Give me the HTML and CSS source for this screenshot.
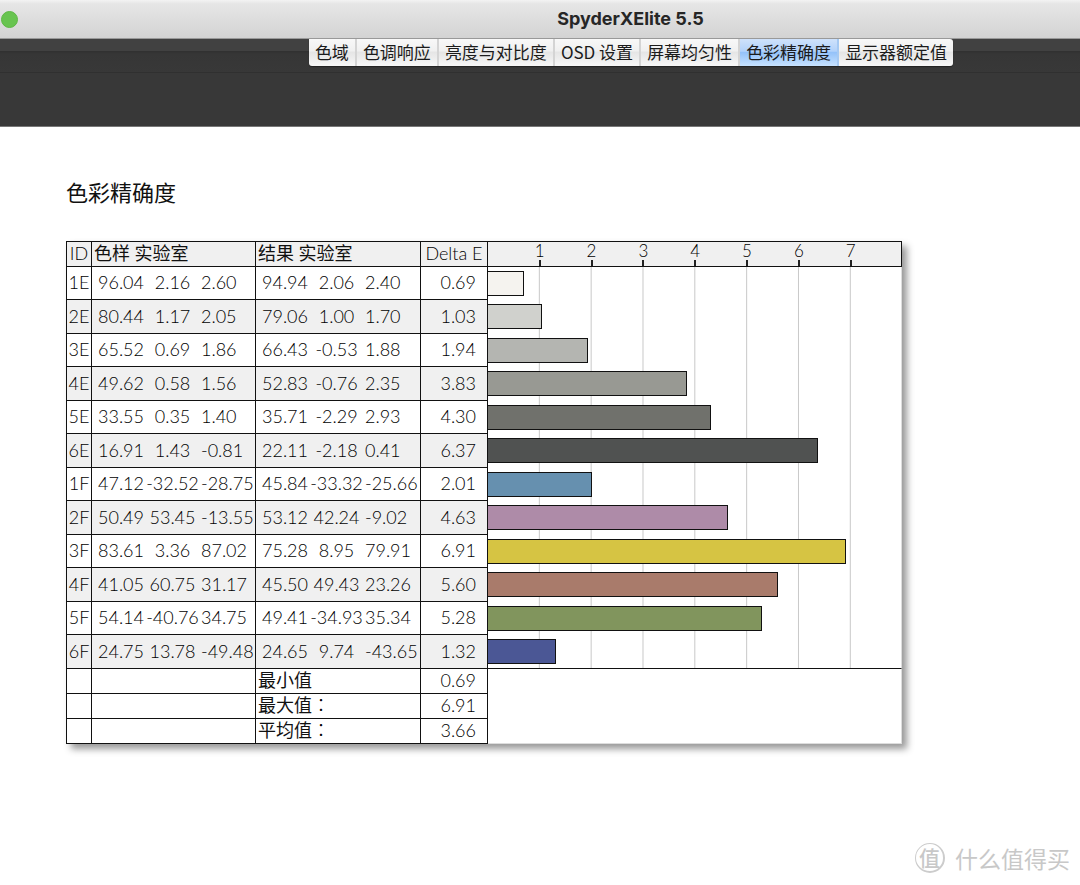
FILE: index.html
```
<!DOCTYPE html>
<html lang="zh-CN">
<head>
<meta charset="utf-8">
<title>SpyderXElite 5.5</title>
<link rel="stylesheet" href="styles.css">
</head>
<body>
<header class="titlebar">
  <button class="zoom-button" type="button" aria-label="缩放窗口"></button>
  <h1 class="window-title">SpyderXElite 5.5</h1>
</header>
<nav class="toolbar">
  <div class="tabs">
    <button class="tab" type="button">色域</button>
    <button class="tab" type="button">色调响应</button>
    <button class="tab" type="button">亮度与对比度</button>
    <button class="tab" type="button">OSD 设置</button>
    <button class="tab" type="button">屏幕均匀性</button>
    <button class="tab tab-active" type="button" aria-current="page">色彩精确度</button>
    <button class="tab" type="button">显示器额定值</button>
  </div>
</nav>
<main class="content">
  <h2 class="heading">色彩精确度</h2>
  <table class="report">
    <colgroup>
      <col class="col-id"><col class="col-sample"><col class="col-result"><col class="col-delta"><col>
    </colgroup>
    <thead>
      <tr>
        <th class="id">ID</th><th>色样 实验室</th><th>结果 实验室</th><th class="delta-head">Delta E</th>
        <th class="axis-cell"><div class="axis"><span>1</span><span>2</span><span>3</span><span>4</span><span>5</span><span>6</span><span>7</span></div></th>
      </tr>
    </thead>
    <tbody>
      <tr><td class="id">1E</td><td><div class="lab"><span>96.04</span><span>2.16</span><span>2.60</span></div></td><td><div class="lab"><span>94.94</span><span>2.06</span><span>2.40</span></div></td><td class="delta">0.69</td><td class="plot"><div class="bar bar-1e" style="width:8.63%"></div></td></tr>
      <tr><td class="id">2E</td><td><div class="lab"><span>80.44</span><span>1.17</span><span>2.05</span></div></td><td><div class="lab"><span>79.06</span><span>1.00</span><span>1.70</span></div></td><td class="delta">1.03</td><td class="plot"><div class="bar bar-2e" style="width:12.98%"></div></td></tr>
      <tr><td class="id">3E</td><td><div class="lab"><span>65.52</span><span>0.69</span><span>1.86</span></div></td><td><div class="lab"><span>66.43</span><span>-0.53</span><span>1.88</span></div></td><td class="delta">1.94</td><td class="plot"><div class="bar bar-3e" style="width:24.3%"></div></td></tr>
      <tr><td class="id">4E</td><td><div class="lab"><span>49.62</span><span>0.58</span><span>1.56</span></div></td><td><div class="lab"><span>52.83</span><span>-0.76</span><span>2.35</span></div></td><td class="delta">3.83</td><td class="plot"><div class="bar bar-4e" style="width:48.07%"></div></td></tr>
      <tr><td class="id">5E</td><td><div class="lab"><span>33.55</span><span>0.35</span><span>1.40</span></div></td><td><div class="lab"><span>35.71</span><span>-2.29</span><span>2.93</span></div></td><td class="delta">4.30</td><td class="plot"><div class="bar bar-5e" style="width:53.97%"></div></td></tr>
      <tr><td class="id">6E</td><td><div class="lab"><span>16.91</span><span>1.43</span><span>-0.81</span></div></td><td><div class="lab"><span>22.11</span><span>-2.18</span><span>0.41</span></div></td><td class="delta">6.37</td><td class="plot"><div class="bar bar-6e" style="width:79.94%"></div></td></tr>
      <tr><td class="id">1F</td><td><div class="lab"><span>47.12</span><span>-32.52</span><span>-28.75</span></div></td><td><div class="lab"><span>45.84</span><span>-33.32</span><span>-25.66</span></div></td><td class="delta">2.01</td><td class="plot"><div class="bar bar-1f" style="width:25.23%"></div></td></tr>
      <tr><td class="id">2F</td><td><div class="lab"><span>50.49</span><span>53.45</span><span>-13.55</span></div></td><td><div class="lab"><span>53.12</span><span>42.24</span><span>-9.02</span></div></td><td class="delta">4.63</td><td class="plot"><div class="bar bar-2f" style="width:58.11%"></div></td></tr>
      <tr><td class="id">3F</td><td><div class="lab"><span>83.61</span><span>3.36</span><span>87.02</span></div></td><td><div class="lab"><span>75.28</span><span>8.95</span><span>79.91</span></div></td><td class="delta">6.91</td><td class="plot"><div class="bar bar-3f" style="width:86.72%"></div></td></tr>
      <tr><td class="id">4F</td><td><div class="lab"><span>41.05</span><span>60.75</span><span>31.17</span></div></td><td><div class="lab"><span>45.50</span><span>49.43</span><span>23.26</span></div></td><td class="delta">5.60</td><td class="plot"><div class="bar bar-4f" style="width:70.28%"></div></td></tr>
      <tr><td class="id">5F</td><td><div class="lab"><span>54.14</span><span>-40.76</span><span>34.75</span></div></td><td><div class="lab"><span>49.41</span><span>-34.93</span><span>35.34</span></div></td><td class="delta">5.28</td><td class="plot"><div class="bar bar-5f" style="width:66.26%"></div></td></tr>
      <tr><td class="id">6F</td><td><div class="lab"><span>24.75</span><span>13.78</span><span>-49.48</span></div></td><td><div class="lab"><span>24.65</span><span>9.74</span><span>-43.65</span></div></td><td class="delta">1.32</td><td class="plot"><div class="bar bar-6f" style="width:16.57%"></div></td></tr>
    </tbody>
    <tfoot>
      <tr><td></td><td></td><th>最小值</th><td class="delta">0.69</td><td class="blank" rowspan="3"></td></tr>
      <tr><td></td><td></td><th>最大值<span class="colon" lang="zh-TW">：</span></th><td class="delta">6.91</td></tr>
      <tr><td></td><td></td><th>平均值<span class="colon" lang="zh-TW">：</span></th><td class="delta">3.66</td></tr>
    </tfoot>
  </table>
</main>
<footer class="brand">
  <span class="brand-seal">值</span>
  <span>什么值得买</span>
</footer>
</body>
</html>
```
FILE: styles.css
```
* { box-sizing: border-box; }

body {
  margin: 0;
  min-height: 100vh;
  display: flex;
  flex-direction: column;
  background: #fff;
  color: #111;
  font-family: Lato, "Noto Sans CJK SC", sans-serif;
}

.titlebar {
  display: flex;
  align-items: center;
  height: 38px;
  padding-left: 1px;
  background: linear-gradient(#f3f3f3, #e6e6e6 10%, #d3d3d3);
}

.zoom-button {
  flex: none;
  width: 17px;
  height: 17px;
  padding: 0;
  border: 1px solid #5eb845;
  border-radius: 50%;
  background: #68c450;
}

.window-title {
  flex: 1;
  margin: 0;
  padding-left: 163px;
  color: #262626;
  font: 700 18px/38px Inter, sans-serif;
  text-align: center;
}

.toolbar {
  display: flex;
  justify-content: center;
  align-items: flex-start;
  height: 89px;
  padding-left: 182px;
  border-top: 1px solid #999;
  border-bottom: 1px solid #777;
  background: linear-gradient(#414141 12px, #303030 12px, #363636 15px, #383838 33px, #303030 33px, #303030 34px, #383838 34px);
}

.tabs {
  display: flex;
  border-radius: 0 3px 3px 3px;
  overflow: hidden;
  box-shadow: 0 1px 1px #222;
}

.tab {
  height: 27px;
  padding: 0 6px 2px;
  border: 0;
  border-right: 2px solid #d4d4d4;
  background: linear-gradient(#f8f8f8, #f0f0f0 45%, #e5e5e5 48%, #f7f7f7);
  color: #1b1b1b;
  font: 17px/25px "Noto Sans CJK SC", sans-serif;
  white-space: nowrap;
}

.tab:last-child { border-right: 0; }

.tab-active {
  border-right-color: #a5c9f2;
  background: linear-gradient(#cfe2fb, #b2d2fa 45%, #94c2f9 50%, #c7e2ff);
}

.content { padding: 48px 178px 0 66px; }

.heading {
  margin: 0 0 34px;
  font: 400 22px/32px "Noto Sans CJK SC", sans-serif;
}

.report {
  width: 100%;
  table-layout: fixed;
  border-collapse: separate;
  border-spacing: 0;
  border-top: 1px solid #111;
  border-left: 1px solid #111;
  background: #fff;
  box-shadow: 5px 5px 7px #999;
  font-size: 18px;
  line-height: 22px;
}

.col-id { width: 25px; }
.col-sample { width: 164px; }
.col-result { width: 165px; }
.col-delta { width: 67px; }

.report th,
.report td {
  padding: 0 0 2px;
  border-right: 1px solid #111;
  border-bottom: 1px solid #111;
  font-weight: 400;
  text-align: left;
  white-space: nowrap;
}

.report th {
  height: 25px;
  padding-left: 2px;
}

.report tbody td { height: 33px; }
.report tbody tr:nth-child(even) td { height: 34px; }
.report tfoot td { height: 25px; }

.report thead th,
.report tbody tr:nth-child(even) td { background-color: #f0f0f0; }

.report .id,
.report .delta-head {
  padding-left: 0;
  text-align: center;
}

.report .id,
.report .delta-head,
.report .delta,
.colon,
.lab,
.axis {
  color: #000;
  font-weight: 300;
}

.report .delta {
  padding-right: 11px;
  text-align: right;
}

.lab {
  display: grid;
  grid-template-columns: 46px 57px 50px;
  padding-left: 6px;
}

.lab span:nth-child(2) { justify-self: center; }

.report .axis-cell { padding: 0; }

.axis {
  display: grid;
  grid-template-columns: repeat(7, 1fr);
  padding: 0 5.9% 0 6.25%;
  font-size: 17px;
  line-height: 18px;
  text-align: center;
}

.axis span::after {
  content: "";
  display: block;
  width: 2px;
  height: 6px;
  margin: 0 auto;
  background: #222;
}

.report tbody .plot,
.report tbody tr:nth-child(even) .plot {
  padding: 0 0 1px;
  border-right-color: #ddd;
  border-bottom: 0;
  background: linear-gradient(to left, #c8c8c8 1px, transparent 1px) 0 0 / 12.55% 100% #fff;
}

.report tbody tr:last-child .plot { border-bottom: 1px solid #111; }

.report .blank {
  border-right-color: #ddd;
  border-bottom-color: #ddd;
}

.bar {
  height: 25px;
  border: 1px solid #111;
  border-left: 0;
}

.bar-1e { background: #f5f3ef; }
.bar-2e { background: #d0d1cd; }
.bar-3e { background: #b4b5b1; }
.bar-4e { background: #989993; }
.bar-5e { background: #70716c; }
.bar-6e { background: #505251; }
.bar-1f { background: #6690af; }
.bar-2f { background: #ae8ba8; }
.bar-3f { background: #d6c443; }
.bar-4f { background: #a97b6b; }
.bar-5f { background: #81955d; }
.bar-6f { background: #4b5795; }

.brand {
  display: flex;
  justify-content: flex-end;
  align-items: center;
  gap: 10px;
  margin-top: auto;
  padding: 0 10px 10px;
  color: #c8c8c8;
  font: 23px/34px "Noto Sans CJK SC", sans-serif;
}

.brand-seal {
  width: 30px;
  height: 30px;
  border: 1px solid #ccc;
  border-right-width: 2px;
  border-bottom-width: 2px;
  border-radius: 50%;
  font-size: 21px;
  font-weight: 500;
  line-height: 26px;
  text-align: center;
}
```
